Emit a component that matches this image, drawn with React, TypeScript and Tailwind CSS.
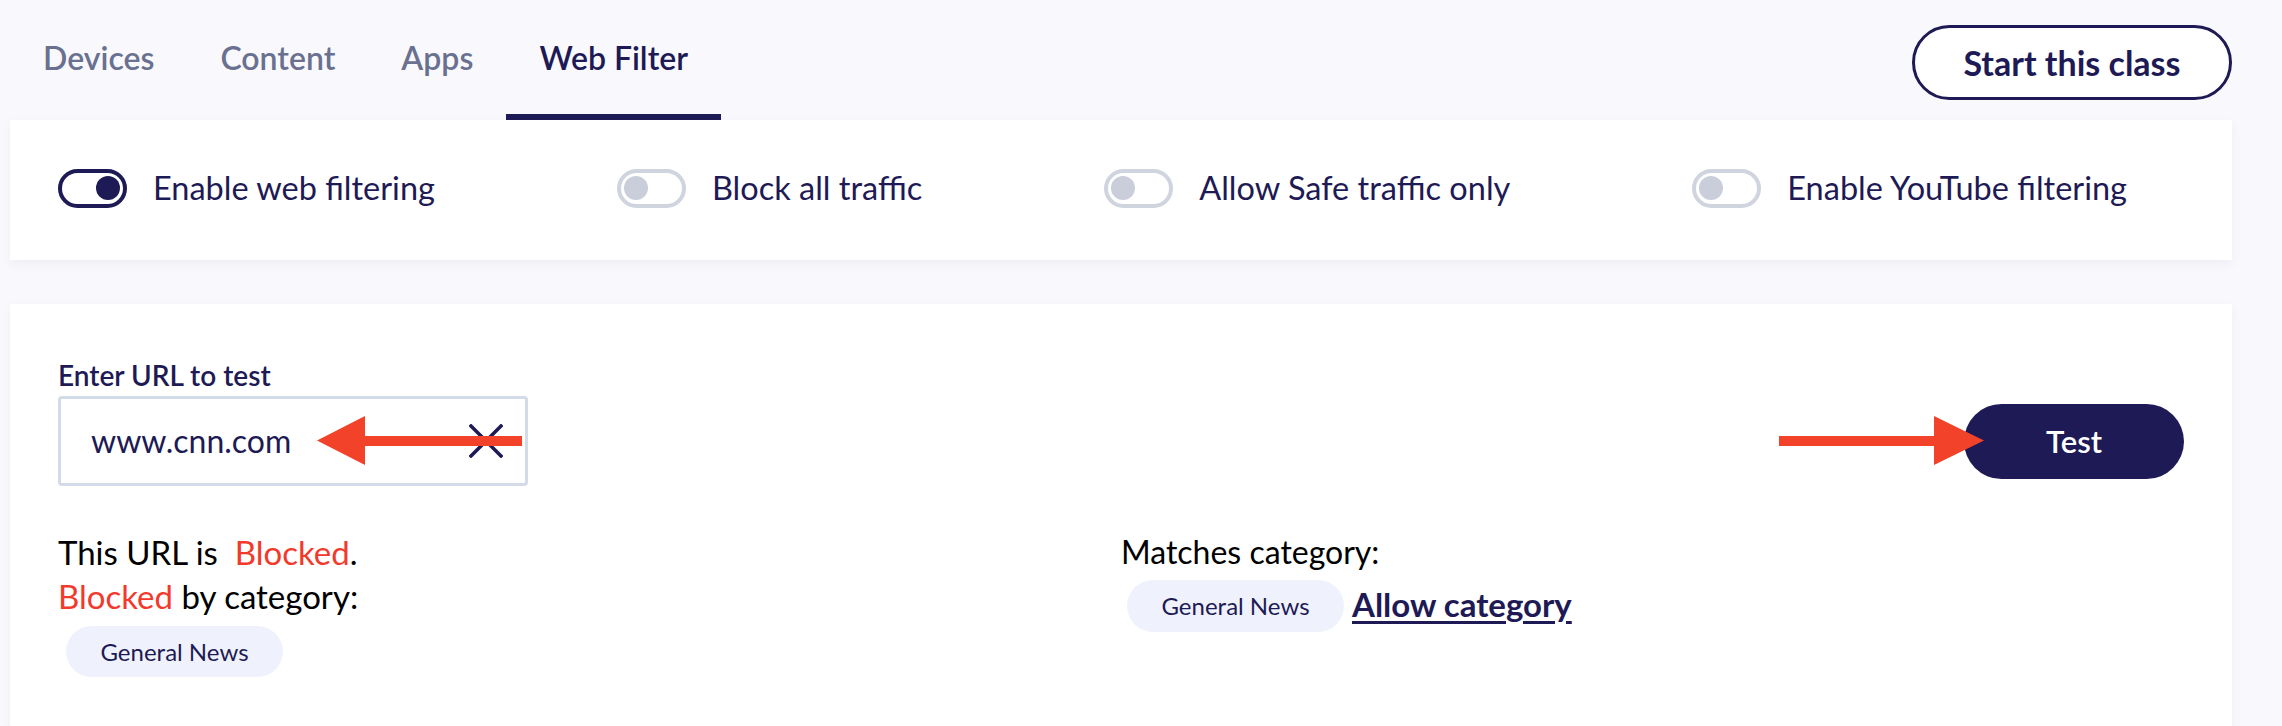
import React from "react";

const NAVY = "text-[#1e1a55]";

function Toggle({ on }: { on: boolean }) {
    return (
        <div
            className={
                "flex items-center w-[69px] h-[39px] rounded-full border-[4px] px-[3px] shrink-0 " +
                (on ? "border-[#1e1a55] justify-end" : "border-[#d0d4de] justify-start")
            }
        >
            <div className={"w-[24px] h-[24px] rounded-full " + (on ? "bg-[#1e1a55]" : "bg-[#c9ceda]")} />
        </div>
    );
}

function Arrow({ dir }: { dir: "left" | "right" }) {
    // red pointer arrow, 205 x 49
    return (
        <svg width="205" height="49" viewBox="0 0 205 49">
            {dir === "left" ? (
                <>
                    <polygon points="0,24.5 48,0 48,49" fill="#f2432a" />
                    <rect x="47" y="20" width="158" height="10" fill="#f2432a" />
                </>
            ) : (
                <>
                    <polygon points="205,24.5 155,0 155,49" fill="#f2432a" />
                    <rect x="0" y="20" width="156" height="10" fill="#f2432a" />
                </>
            )}
        </svg>
    );
}

export default function App() {
    const tabs = ["Devices", "Content", "Apps", "Web Filter"];
    const toggles = [
        { label: "Enable web filtering", on: true },
        { label: "Block all traffic", on: false },
        { label: "Allow Safe traffic only", on: false },
        { label: "Enable YouTube filtering", on: false },
    ];

    return (
        <div className="min-h-screen bg-[#f9f9fd] pl-[10px] pr-[50px] font-['Lato',sans-serif]">
            {/* header: tabs + start button */}
            <div className="flex justify-between h-[120px]">
                <div className="flex">
                    {tabs.map((t) => (
                        <div
                            key={t}
                            className={
                                "flex items-center px-[33px] pt-[2px] text-[32px] font-semibold border-b-[6px] " +
                                (t === "Web Filter"
                                    ? "text-[#1e1a55] border-[#1e1a55]"
                                    : "text-[#6a7190] border-transparent")
                            }
                        >
                            {t}
                        </div>
                    ))}
                </div>
                <button
                    className={
                        "self-start mt-[25px] w-[320px] h-[75px] rounded-full border-[3px] border-[#1e1a55] bg-white text-[34px] font-bold " +
                        NAVY
                    }
                >
                    Start this class
                </button>
            </div>

            {/* toggles card */}
            <div className="bg-white h-[140px] shadow-[0_4px_10px_rgba(30,26,85,0.06)] flex items-center justify-between pl-[48px] pr-[105px] pb-[4px]">
                {toggles.map((t) => (
                    <div key={t.label} className="flex items-center gap-[26px]">
                        <Toggle on={t.on} />
                        <span className={"text-[32.5px] " + NAVY}>{t.label}</span>
                    </div>
                ))}
            </div>

            {/* URL test card */}
            <div className="bg-white mt-[44px] min-h-[430px] px-[48px] pt-[54px] shadow-[0_4px_10px_rgba(30,26,85,0.06)]">
                <div className="flex justify-between items-end">
                    <div>
                        <div className={"text-[28px] font-semibold leading-[34px] mb-[4px] " + NAVY}>Enter URL to test</div>
                        <div className="relative flex items-center justify-between w-[470px] h-[90px] border-[3px] border-[#d3dbe8] rounded-[4px] pl-[30px] pr-[22px]">
                            <span className={"text-[32px] " + NAVY}>www.cnn.com</span>
                            <svg width="34" height="34" viewBox="0 0 34 34" className="text-[#1e1a55]">
                                <path d="M2 2 L32 32 M32 2 L2 32" stroke="currentColor" strokeWidth="3.5" strokeLinecap="square" />
                            </svg>
                            <div className="absolute left-[256px] top-[17px]">
                                <Arrow dir="left" />
                            </div>
                        </div>
                    </div>
                    <div className="relative mb-[7px]">
                        <button className="w-[220px] h-[75px] rounded-full bg-[#1e1a55] text-white text-[31px] font-semibold">
                            Test
                        </button>
                        <div className="absolute left-[-185px] top-[12px]">
                            <Arrow dir="right" />
                        </div>
                    </div>
                </div>

                <div className="grid grid-cols-2 mt-[44px]">
                    <div className="text-[33px] leading-[44px] text-black">
                        <div>
                            This URL is&nbsp; <span className="text-[#f2392b]">Blocked</span>.
                        </div>
                        <div>
                            <span className="text-[#f2392b]">Blocked</span> by category:
                        </div>
                        <div className="mt-[8px] ml-[8px] inline-flex items-center justify-center w-[217px] h-[51px] rounded-full bg-[#eff2fc]">
                            <span className={"text-[24px] leading-none " + NAVY}>General News</span>
                        </div>
                    </div>
                    <div className="text-[32px] leading-[44px] text-black">
                        <div>Matches category:</div>
                        <div className="mt-[6px] ml-[6px] flex items-center gap-[8px]">
                            <div className="flex items-center justify-center w-[217px] h-[52px] rounded-full bg-[#eff2fc]">
                                <span className={"text-[24px] leading-none " + NAVY}>General News</span>
                            </div>
                            <a className={"text-[33px] font-bold underline decoration-[3px] underline-offset-[4px] pb-[4px] " + NAVY}>
                                Allow category
                            </a>
                        </div>
                    </div>
                </div>
            </div>
        </div>
    );
}
